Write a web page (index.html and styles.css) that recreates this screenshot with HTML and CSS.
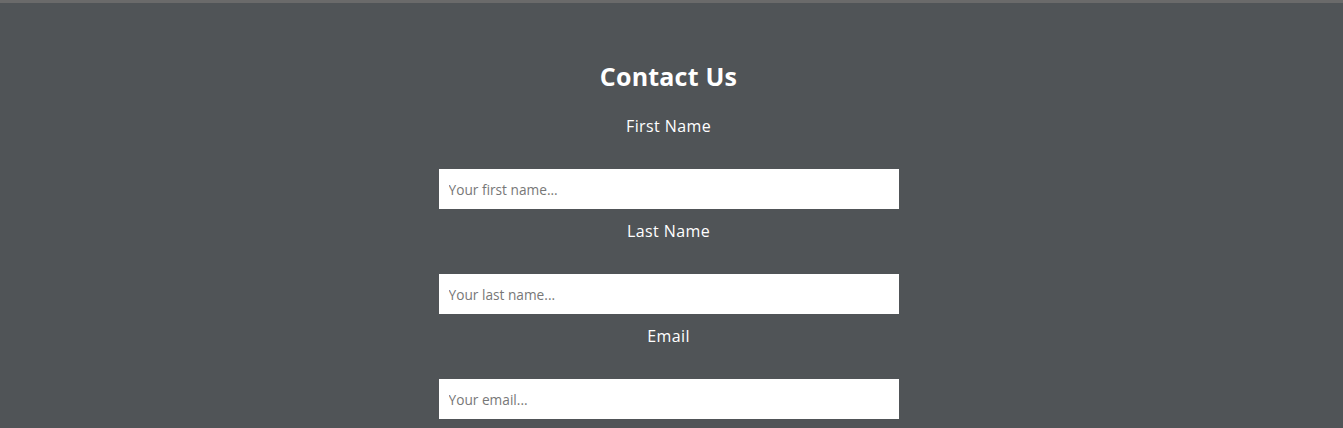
FILE: index.html
```html
<!DOCTYPE html>
<html lang="en">
<head>
<meta charset="utf-8">
<title>Contact Us</title>
<link rel="stylesheet" href="styles.css">
</head>
<body>
<div class="topbar"></div>
<main class="page">
  <h2 class="title">Contact Us</h2>
  <form class="form">
    <label class="label" for="fname">First Name</label>
    <input class="field" id="fname" type="text" placeholder="Your first name...">
    <label class="label" for="lname">Last Name</label>
    <input class="field" id="lname" type="text" placeholder="Your last name...">
    <label class="label" for="email">Email</label>
    <input class="field" id="email" type="email" placeholder="Your email...">
  </form>
</main>
</body>
</html>
```
FILE: styles.css
```css
html, body {
  margin: 0;
  padding: 0;
  background: #505457;
  font-family: "Open Sans", "DejaVu Sans", sans-serif;
  color: #ffffff;
  overflow: hidden;
}
.topbar {
  height: 3px;
  background: #6a6a6a;
}
.page {
  padding: 55px 6px 0 0;
  display: flex;
  flex-direction: column;
  align-items: center;
}
.title {
  margin: 0;
  font-size: 25px;
  line-height: 36px;
  font-weight: 700;
  letter-spacing: 0.2px;
}
.form {
  margin-top: 20px;
  width: 460px;
  display: flex;
  flex-direction: column;
  align-items: stretch;
}
.label {
  display: block;
  text-align: center;
  font-size: 16px;
  line-height: 24px;
  letter-spacing: 0.4px;
  margin-bottom: 31px;
}
.field {
  box-sizing: border-box;
  height: 40px;
  border: none;
  outline: none;
  background: #ffffff;
  padding: 0 10px;
  font-family: "Open Sans", "DejaVu Sans", sans-serif;
  font-size: 13.7px;
  color: #333;
  margin-bottom: 10px;
}
.field::placeholder {
  color: #777777;
}
```
